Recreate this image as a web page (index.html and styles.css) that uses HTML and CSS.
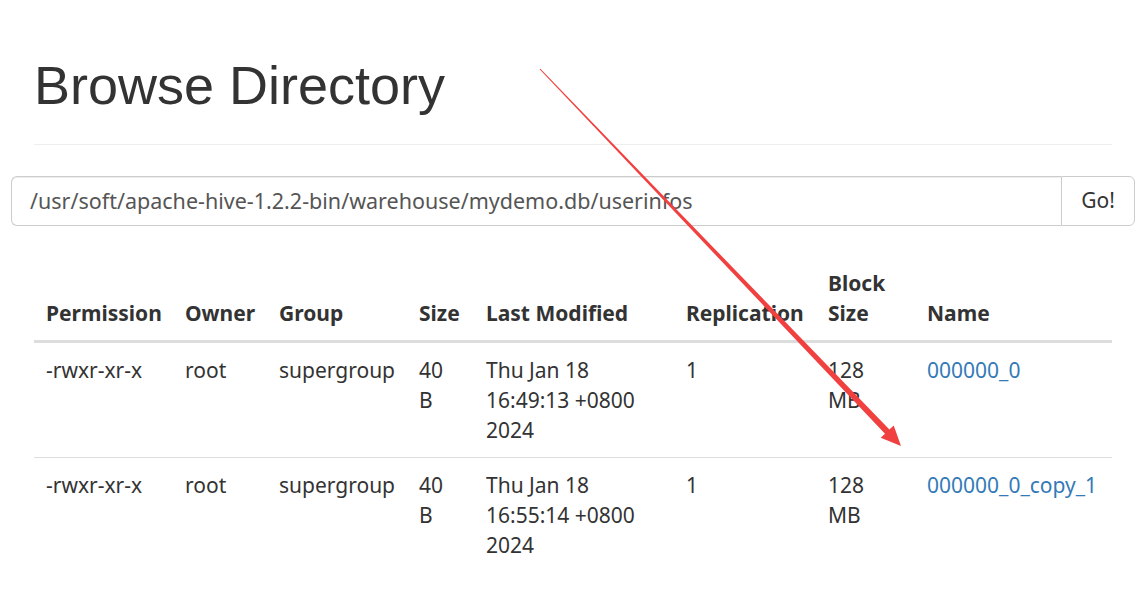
FILE: index.html
```html
<!DOCTYPE html>
<html>
<head>
<meta charset="utf-8">
<link rel="stylesheet" href="styles.css">
</head>
<body>
<div class="container">
  <div class="page-header">
    <h1>Browse Directory</h1>
  </div>
  <form class="input-group">
    <input class="form-control" type="text" value="/usr/soft/apache-hive-1.2.2-bin/warehouse/mydemo.db/userinfos">
    <button class="btn" type="button">Go!</button>
  </form>
  <table class="table">
    <colgroup>
      <col class="c1"><col class="c2"><col class="c3"><col class="c4"><col class="c5"><col class="c6"><col class="c7"><col class="c8">
    </colgroup>
    <thead>
      <tr>
        <th>Permission</th><th>Owner</th><th>Group</th><th>Size</th><th>Last Modified</th><th>Replication</th><th><span class="wrap">Block Size</span></th><th>Name</th>
      </tr>
    </thead>
    <tbody>
      <tr>
        <td>-rwxr-xr-x</td><td>root</td><td>supergroup</td><td><span class="wrap">40 B</span></td><td>Thu Jan 18 16:49:13 +0800 2024</td><td>1</td><td><span class="wrap">128 MB</span></td><td><a href="#">000000_0</a></td>
      </tr>
      <tr>
        <td>-rwxr-xr-x</td><td>root</td><td>supergroup</td><td><span class="wrap">40 B</span></td><td>Thu Jan 18 16:55:14 +0800 2024</td><td>1</td><td><span class="wrap">128 MB</span></td><td><a href="#">000000_0_copy_1</a></td>
      </tr>
    </tbody>
  </table>
</div>
<svg class="annotation" width="1148" height="609" viewBox="0 0 1148 609">
  <polygon fill="#f0403f" points="540.4,68.7 889.4,429.5 893.7,425.4 901,446 880.7,437.8 885.0,433.7 539.6,69.3"/>
</svg>
</body>
</html>
```
FILE: styles.css
```css
html, body {
  margin: 0;
  padding: 0;
  background: #fff;
}
body {
  font-family: "Noto Sans", "Open Sans", sans-serif;
  font-size: 21px;
  line-height: 30px;
  color: #333;
  width: 1148px;
  height: 609px;
  overflow: hidden;
  position: relative;
}
.container {
  padding: 0 36px 0 34px;
}
.page-header {
  padding-top: 55px;
  padding-bottom: 29px;
  border-bottom: 1px solid #eee;
  margin-bottom: 31px;
}
h1 {
  margin: 0;
  font-family: "Liberation Sans", Arial, sans-serif;
  font-weight: 400;
  font-size: 54px;
  line-height: 60px;
  color: #333;
}
.input-group {
  display: flex;
  margin: 0 -23px 0 -23px;
  height: 50px;
}
.form-control {
  flex: 1;
  box-sizing: border-box;
  height: 50px;
  padding: 0 18px 2px 18px;
  border: 1px solid #ccc;
  border-right: 0;
  border-radius: 6px 0 0 6px;
  font-family: inherit;
  font-size: 21.5px;
  color: #555;
  box-shadow: inset 0 1px 1px rgba(0,0,0,0.075);
  outline: none;
}
.btn {
  box-sizing: border-box;
  width: 74px;
  height: 50px;
  border: 1px solid #ccc;
  border-radius: 0 6px 6px 0;
  background: #fff;
  font-family: inherit;
  font-size: 21px;
  color: #333;
  padding: 0 0 2px 0;
}
.table {
  margin-top: 30px;
  width: 1078px;
  border-collapse: collapse;
  table-layout: fixed;
}
.c1 { width: 139px; }
.c2 { width: 94px; }
.c3 { width: 140px; }
.c4 { width: 67px; }
.c5 { width: 200px; }
.c6 { width: 142px; }
.c7 { width: 99px; }
.c8 { width: 197px; }
.table th,
.table td {
  padding: 12px;
  text-align: left;
  vertical-align: top;
}
.table th {
  font-weight: 700;
  vertical-align: bottom;
  border-bottom: 3px solid #ddd;
}
.table tbody tr + tr td {
  border-top: 1px solid #ddd;
}
.wrap {
  display: inline-block;
  width: min-content;
}
a {
  color: #337ab7;
  text-decoration: none;
}
.annotation {
  position: absolute;
  left: 0;
  top: 0;
  pointer-events: none;
}
```
